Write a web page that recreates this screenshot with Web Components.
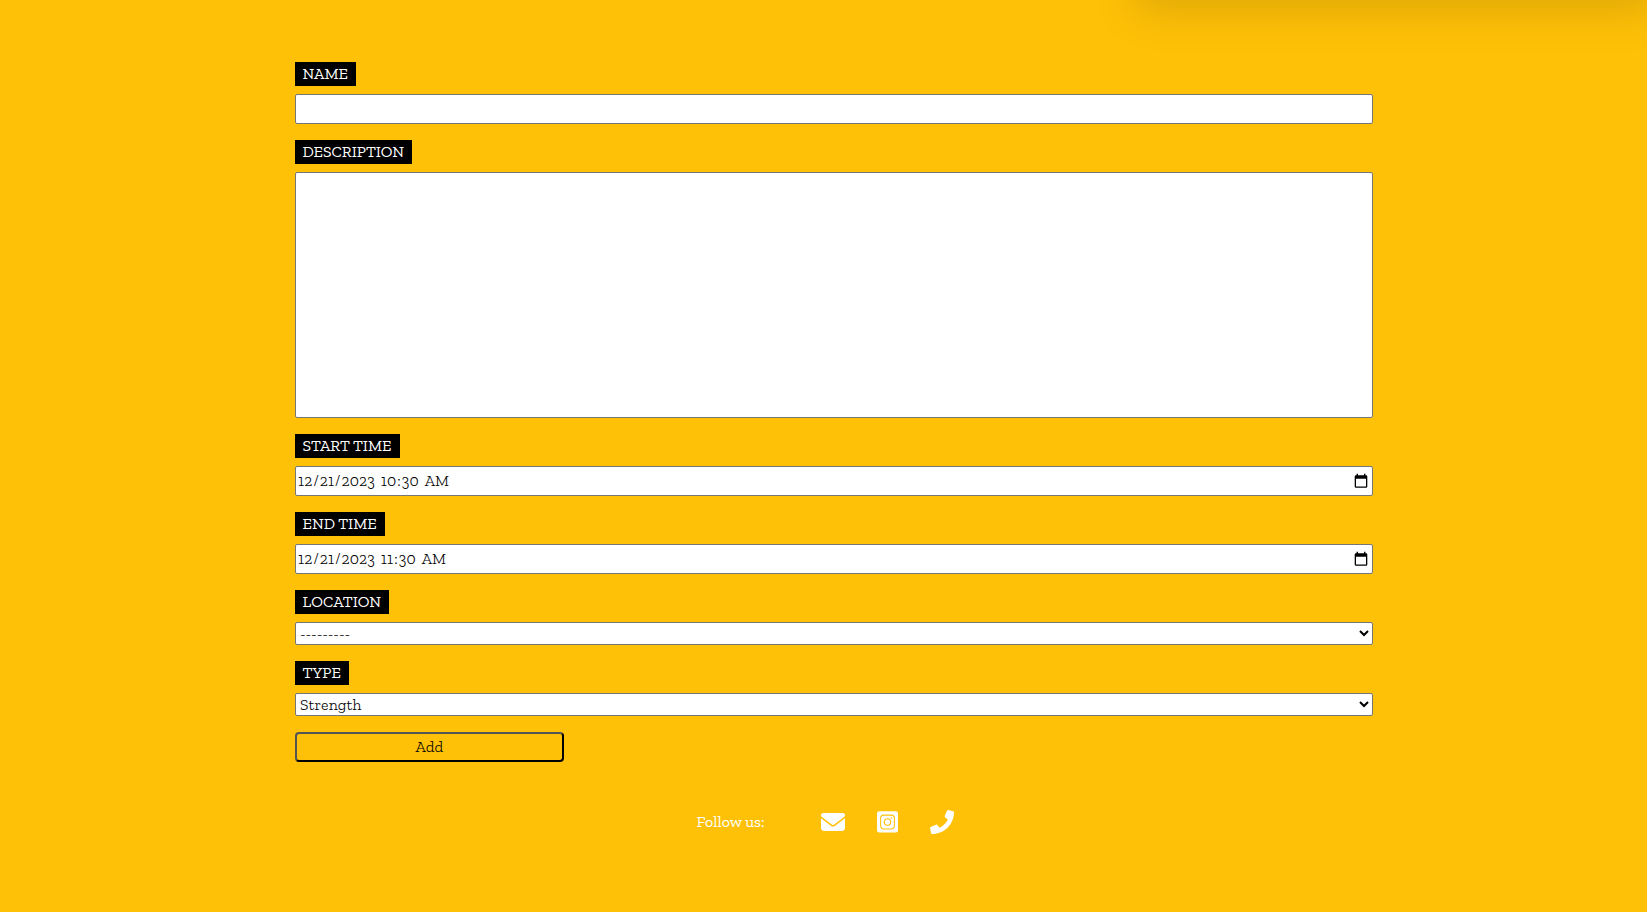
<!DOCTYPE html>
<html lang="en"><head><meta charset="utf-8"><title>Add event</title>
<style>
html,body{margin:0;height:100%;overflow:hidden;background:#ffc107}
body{font-family:"Zilla Slab","DejaVu Serif Condensed","DejaVu Serif",serif;font-size:16px}
</style></head><body>
<event-page></event-page>
<script>
const define=(name,html,init)=>customElements.define(name,class extends HTMLElement{
  constructor(){super();this.attachShadow({mode:'open'}).innerHTML=html;}
  connectedCallback(){if(init)init(this,this.shadowRoot);}
});
// Spreads letter spacing so that the text fills the given width.
const fit=(el,text,width)=>{
  const c=document.createElement('canvas').getContext('2d'),s=getComputedStyle(el);
  c.font=s.fontWeight+' '+s.fontSize+' '+s.fontFamily;
  el.style.letterSpacing=((width-c.measureText(text).width)/text.length).toFixed(3)+'px';
};
define('fit-text',`<style>:host{display:inline-block;white-space:pre}</style><slot></slot>`,
  h=>fit(h,h.textContent,+h.getAttribute('width')));
define('form-field',`<style>
:host{display:flex;flex-direction:column;align-items:flex-start;gap:8px}
label{box-sizing:border-box;height:24px;line-height:24px;padding:0 7.5px;background:#000;color:#fff;white-space:nowrap}
::slotted(*){align-self:stretch}
</style><label><fit-text></fit-text></label><slot></slot>`,
  (h,r)=>{const t=r.querySelector('fit-text');t.textContent=h.getAttribute('label');
    const w=+h.getAttribute('width');r.querySelector('label').style.width=w+'px';fit(t,t.textContent,w-15.5);});
const box='box-sizing:border-box;display:block;width:100%;margin:0;border:1px solid #767676;border-radius:2px;background:#fff;color:#000;font:inherit;font-weight:300;outline:0;';
define('text-box',`<style>:host{display:block}input{${box}height:30px;padding:1px 2px}</style><input type="text">`);
define('text-area',`<style>:host{display:block}textarea{${box}height:246px;padding:2px;resize:none}</style><textarea></textarea>`);
define('date-box',`<style>:host{display:block;font-weight:300}div{${box}display:flex;align-items:center;justify-content:space-between;height:30px;padding:0 4px 0 1px}p{margin:0;padding-bottom:2px;white-space:pre}b{font-weight:300;padding:0 1px}svg{display:block}</style>
<div><p></p><svg width="14" height="16" viewBox="0 0 14 16"><path d="M2.600 .8h1.400v1.400h6V.8h1.400v1.400h.7A1.3 1.3 0 0 1 13.300 3.500v10A1.300 1.300 0 0 1 12 14.800H2A1.300 1.300 0 0 1 .7 13.500v-10A1.300 1.300 0 0 1 2 2.200h.6zM2 5.800v7.700h10V5.800z" fill-rule="evenodd"/></svg></div>`,
  (h,r)=>{const p=r.querySelector('p'),v=h.getAttribute('value');
    p.innerHTML=v.replace(/\w+/g,'<b>$&</b>');fit(p,v,+h.getAttribute('width')-12);});
define('select-box',`<style>:host{display:block}select{${box}height:23px;padding:0}</style><select><option></option></select>`,
  (h,r)=>{const s=r.querySelector('select');s.options[0].textContent=h.getAttribute('value');fit(s,h.getAttribute('value'),+h.getAttribute('width'));});
define('add-button',`<style>:host{display:block;font-weight:300}button{box-sizing:border-box;display:block;width:269px;height:30px;padding:0 0 2px;border:2px outset #000;border-radius:4px;background:transparent;color:#000;font:inherit}</style><button><slot></slot></button>`);
define('follow-bar',`<style>
:host{display:flex;align-items:center;height:26px;color:#fff}
svg{display:block;fill:#fff}
fit-text{padding-bottom:2px}
.mail{margin-left:56px}.insta{margin-left:32px}.phone{margin-left:32px}
</style><fit-text width="68.5">Follow us:</fit-text>
<svg class="mail" width="24" height="24" viewBox="0 0 512 512"><path d="M48 64C21.500 64 0 85.500 0 112c0 15.100 7.100 29.300 19.200 38.400l217.600 163.200c11.400 8.500 27 8.500 38.400 0l217.600-163.200c12.100-9.100 19.200-23.300 19.200-38.400 0-26.500-21.500-48-48-48zM0 176v208c0 35.300 28.700 64 64 64h384c35.300 0 64-28.700 64-64V176L294.400 339.200c-22.800 17.100-54 17.100-76.800 0z"/></svg>
<svg class="insta" width="21" height="24" viewBox="0 0 448 512"><path fill-rule="evenodd" d="M48 24h352a48 48 0 0 1 48 48v360a48 48 0 0 1-48 48H48a48 48 0 0 1-48-48V72a48 48 0 0 1 48-48zM144 98Q66 98 66 176V336Q66 414 144 414H304Q382 414 382 336V176Q382 98 304 98zM146 120H302Q360 120 360 178V334Q360 392 302 392H146Q88 392 88 334V178Q88 120 146 120zM224 175a81 81 0 1 0 0 162 81 81 0 1 0 0-162zM224 199a57 57 0 1 1 0 114 57 57 0 1 1 0-114zM308 157a15 15 0 1 0 0 30 15 15 0 1 0 0-30z"/></svg>
<svg class="phone" width="24" height="24" viewBox="0 0 512 512"><path d="M493.400 24.600l-104-24c-11.300-2.600-22.900 3.300-27.500 13.900l-48 112c-4.200 9.800-1.400 21.300 6.900 28l60.600 49.600c-36 76.700-98.900 140.500-177.200 177.200l-49.600-60.600c-6.800-8.300-18.200-11.100-28-6.900l-112 48C3.900 366.500-2 378.100.6 389.400l24 104C27.100 504.200 36.700 512 48 512c256.100 0 464-207.500 464-464 0-11.200-7.700-20.900-18.600-23.400z"/></svg>`);
define('top-shadow',`<style>:host{display:block;position:absolute;left:1134px;top:-300px;width:524px;height:300px;box-shadow:0 12px 40px rgba(0,0,0,.13)}</style>`);
define('event-page',`<style>
:host{display:block;position:relative;height:912px;overflow:hidden}
main{display:flex;flex-direction:column;gap:16px;width:1078px;margin-left:295px;padding-top:62px}
follow-bar{margin:47px 0 0 696.5px}
</style><top-shadow></top-shadow><main>
<form-field label="NAME" width="61"><text-box></text-box></form-field>
<form-field label="DESCRIPTION" width="117"><text-area></text-area></form-field>
<form-field label="START TIME" width="105"><date-box value="12/21/2023 10:30 AM" width="153"></date-box></form-field>
<form-field label="END TIME" width="90"><date-box value="12/21/2023 11:30 AM" width="150"></date-box></form-field>
<form-field label="LOCATION" width="94"><select-box value="---------" width="50"></select-box></form-field>
<form-field label="TYPE" width="54"><select-box value="Strength" width="61.5"></select-box></form-field>
<add-button><fit-text width="28">Add</fit-text></add-button>
</main><follow-bar></follow-bar>`);
</script></body></html>
